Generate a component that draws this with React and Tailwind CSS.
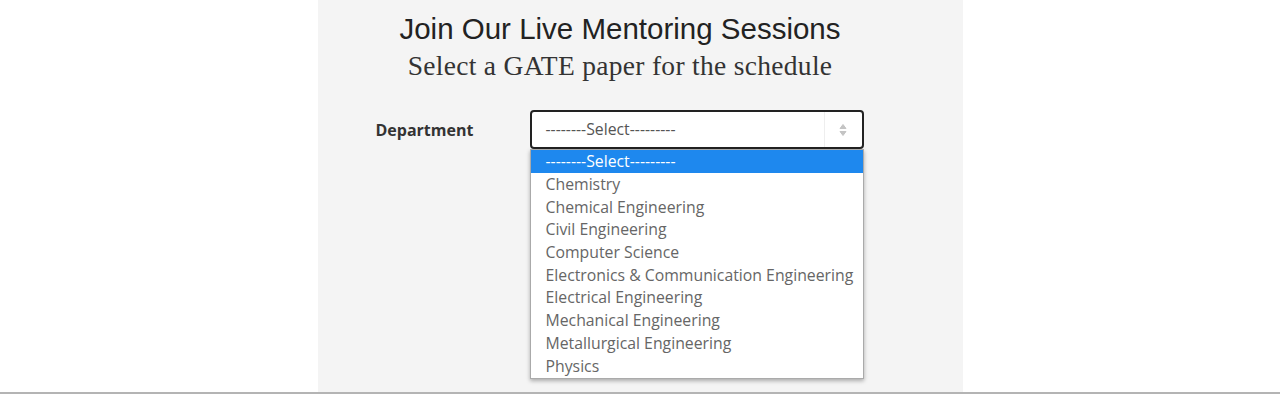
import React from "react";

const options = [
  "Chemistry",
  "Chemical Engineering",
  "Civil Engineering",
  "Computer Science",
  "Electronics & Communication Engineering",
  "Electrical Engineering",
  "Mechanical Engineering",
  "Metallurgical Engineering",
  "Physics",
];

export default function App() {
  return (
    <div className="w-[1280px] h-[394px] bg-white flex flex-col overflow-hidden">
      <div className="flex-1 flex justify-center">
        <div className="w-[645px] bg-[#f4f4f4] flex flex-col">
          <div className="flex flex-col items-center pr-[40px] pt-[11px]">
            <h1
              className="text-[29.5px] leading-[36px] text-[#222]"
              style={{ fontFamily: '"Liberation Sans", Arial, sans-serif' }}
            >
              Join Our Live Mentoring Sessions
            </h1>
            <h2
              className="text-[27.5px] leading-[32px] text-[#333] tracking-[0.3px] mt-[3px]"
              style={{ fontFamily: '"Liberation Serif", "DejaVu Serif", serif' }}
            >
              Select a GATE paper for the schedule
            </h2>
          </div>
          <div
            className="flex items-center mt-[28px] pl-[58px]"
            style={{ fontFamily: '"Open Sans", "Noto Sans", sans-serif' }}
          >
            <div className="w-[154px] text-[16px] font-bold text-[#333]">Department</div>
            <div className="relative w-[334px]">
              <div className="h-[39px] border-2 border-[#222] rounded-[4px] bg-white flex items-center">
                <span className="flex-1 pl-[14px] text-[15.8px] text-[#555]">--------Select---------</span>
                <div className="w-[38px] h-full border-l border-[#eee] flex items-center justify-center">
                  <svg width="10" height="16" viewBox="0 0 10 16" fill="#c4c4c4" stroke="#c4c4c4" strokeWidth="1" strokeLinejoin="round">
                    <path d="M2 6.5 L5 2.5 L8 6.5 Z" />
                    <path d="M2 9.5 L5 13.5 L8 9.5 Z" />
                  </svg>
                </div>
              </div>
              <ul className="absolute left-0 top-[39px] w-[334px] bg-white border border-[#aaa] shadow-[0_2px_4px_rgba(0,0,0,0.3)] pb-[1px]">
                <li className="h-[23px] leading-[23px] pl-[15px] text-[15.8px] bg-[#1e88ee] text-white">
                  --------Select---------
                </li>
                {options.map((o) => (
                  <li key={o} className="h-[22.7px] leading-[22.7px] pl-[15px] text-[15.8px] text-[#666]">
                    {o}
                  </li>
                ))}
              </ul>
            </div>
          </div>
        </div>
      </div>
      <div className="h-[2px] bg-[#b4b4b4]" />
    </div>
  );
}
